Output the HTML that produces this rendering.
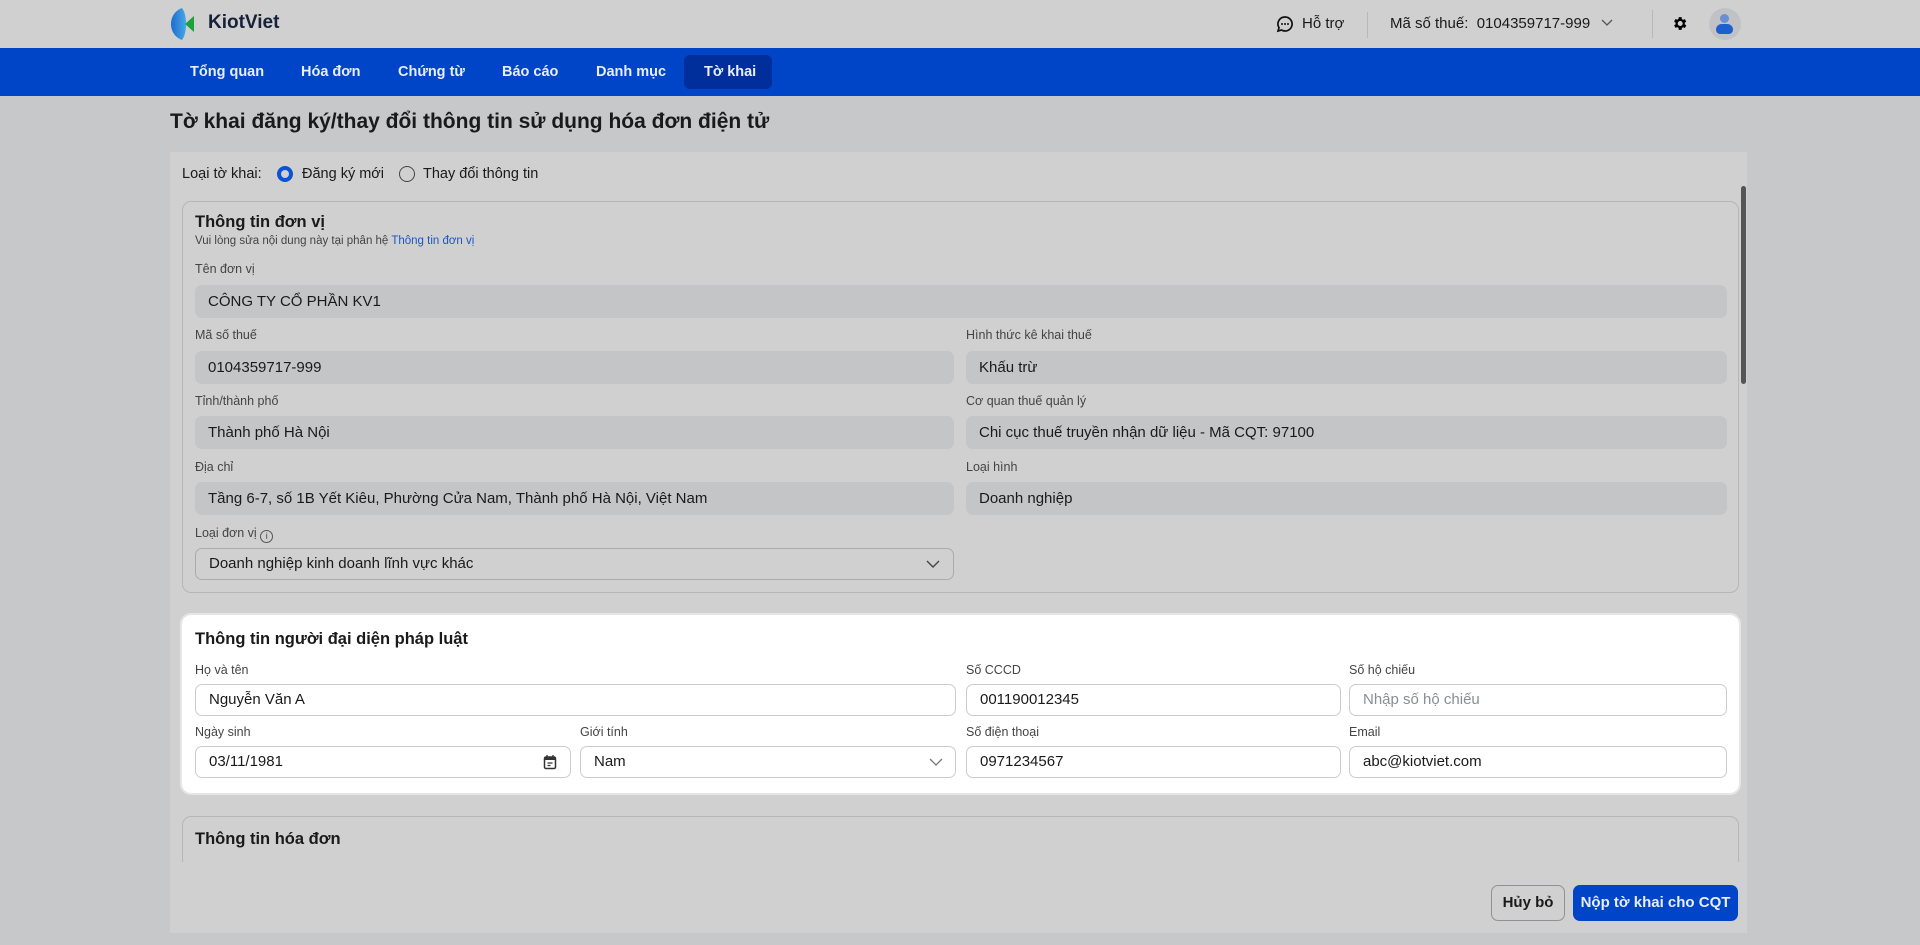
<!DOCTYPE html>
<html><head><meta charset="utf-8">
<style>
*{box-sizing:border-box;margin:0;padding:0}
body{width:1920px;height:945px;overflow:hidden;background:#c7c8ca;font-family:"Liberation Sans",sans-serif;color:#1a1a1a;position:relative}
.a{position:absolute}
.hdr{left:0;top:0;width:1920px;height:48px;background:#d0d0d0}
.nav{left:0;top:48px;width:1920px;height:48px;background:#0044c8}
.ni{top:48px;height:48px;line-height:48px;color:#e8eefc;font-size:14.5px;font-weight:bold}
.panel{left:170px;top:152px;width:1577px;height:781px;background:#d0d0d0}
.box{border:1px solid #b5b6b8;border-radius:9px}
.lbl{font-size:12.5px;color:#444}
.inp{height:33px;border-radius:7px;background:#c4c5c7;font-size:15px;line-height:33px;padding-left:13px;color:#1a1a1a}
.w{background:#fff;border:1px solid #c9ccd2;height:32px;line-height:30px}
.st{font-size:16.5px;font-weight:bold}
</style></head><body>
<div class="a hdr"></div>
<svg class="a" style="left:170px;top:8px" width="26" height="32" viewBox="0 0 26 32"><defs><linearGradient id="g" x1="0" y1="0" x2="1" y2="0"><stop offset="0" stop-color="#1f6bd1"/><stop offset="1" stop-color="#45a8e6"/></linearGradient></defs><path d="M12 0 C4 3 1 10 1 16 C1 22 4 29 12 32 C15 28 16 22 16 16 C16 10 15 4 12 0 Z" fill="url(#g)"/><path d="M24 8 L15 16 L24 24 Z" fill="#1aa33a"/></svg>
<div class="a" style="left:208px;top:12px;font-size:19px;font-weight:bold;color:#18213a">KiotViet</div>
<svg class="a" style="left:1276px;top:15px" width="18" height="18" viewBox="0 0 18 18"><path d="M9 2a7 7 0 1 1-3.5 13L2 16l1-3.3A7 7 0 0 1 9 2z" fill="none" stroke="#111" stroke-width="1.7"/><circle cx="6" cy="9" r="1" fill="#111"/><circle cx="9" cy="9" r="1" fill="#111"/><circle cx="12" cy="9" r="1" fill="#111"/></svg>
<div class="a" style="left:1302px;top:15px;font-size:15px">Hỗ trợ</div>
<div class="a" style="left:1367px;top:12px;width:1px;height:26px;background:#b8b8b8"></div>
<div class="a" style="left:1390px;top:15px;font-size:15px">Mã số thuế:&nbsp;&nbsp;0104359717-999</div>
<svg class="a" style="left:1601px;top:18px" width="12" height="10" viewBox="0 0 12 10"><path d="M1 2l5 5 5-5" fill="none" stroke="#555" stroke-width="1.3"/></svg>
<div class="a" style="left:1652px;top:10px;width:1px;height:28px;background:#b8b8b8"></div>
<svg class="a" style="left:1671px;top:15px" width="17" height="17" viewBox="0 0 24 24"><path fill="#000" d="M19.4 13a7.5 7.5 0 0 0 0-2l2.1-1.6-2-3.5-2.5 1a7 7 0 0 0-1.7-1L15 3h-4l-.4 2.7a7 7 0 0 0-1.7 1l-2.5-1-2 3.5L6.5 11a7.5 7.5 0 0 0 0 2l-2.1 1.6 2 3.5 2.5-1a7 7 0 0 0 1.7 1L11 21h4l.4-2.7a7 7 0 0 0 1.7-1l2.5 1 2-3.5zM13 15.5a3.5 3.5 0 1 1 0-7 3.5 3.5 0 0 1 0 7z"/></svg>
<div class="a" style="left:1709px;top:8px;width:32px;height:32px;border-radius:50%;background:#c0c2c6"></div>
<div class="a" style="left:1720px;top:14px;width:9px;height:9px;border-radius:50%;background:#6b8fcf"></div>
<div class="a" style="left:1716px;top:24px;width:17px;height:10px;border-radius:8px 8px 6px 6px;background:#1d5fcc"></div>
<div class="a nav"></div>
<div class="a ni" style="left:190px">Tổng quan</div>
<div class="a ni" style="left:301px">Hóa đơn</div>
<div class="a ni" style="left:398px">Chứng từ</div>
<div class="a ni" style="left:502px">Báo cáo</div>
<div class="a ni" style="left:596px">Danh mục</div>
<div class="a" style="left:684px;top:55px;width:88px;height:34px;border-radius:6px;background:#002f9c"></div>
<div class="a ni" style="left:704px">Tờ khai</div>
<div class="a" style="left:170px;top:110px;font-size:21px;font-weight:bold">Tờ khai đăng ký/thay đổi thông tin sử dụng hóa đơn điện tử</div>
<div class="a panel"></div>
<div class="a" style="left:1741px;top:186px;width:5px;height:198px;border-radius:3px;background:#555"></div>
<div class="a" style="left:182px;top:166px;font-size:14.5px">Loại tờ khai:</div>
<div class="a" style="left:277px;top:166px;width:16px;height:16px;border-radius:50%;border:4.5px solid #0b52d4;background:#d0d0d0"></div>
<div class="a" style="left:302px;top:166px;font-size:14.5px">Đăng ký mới</div>
<div class="a" style="left:399px;top:166px;width:16px;height:16px;border-radius:50%;border:1.3px solid #444"></div>
<div class="a" style="left:423px;top:166px;font-size:14.5px">Thay đổi thông tin</div>

<div class="a box" style="left:182px;top:201px;width:1557px;height:392px"></div>
<div class="a st" style="left:195px;top:213px">Thông tin đơn vị</div>
<div class="a" style="left:195px;top:235px;font-size:11.5px;color:#444">Vui lòng sửa nội dung này tại phân hệ <span style="color:#1a55c8">Thông tin đơn vị</span></div>
<div class="a lbl" style="left:195px;top:262px">Tên đơn vị</div>
<div class="a inp" style="left:195px;top:285px;width:1532px">CÔNG TY CỔ PHẦN KV1</div>
<div class="a lbl" style="left:195px;top:328px">Mã số thuế</div>
<div class="a lbl" style="left:966px;top:328px">Hình thức kê khai thuế</div>
<div class="a inp" style="left:195px;top:351px;width:759px">0104359717-999</div>
<div class="a inp" style="left:966px;top:351px;width:761px">Khấu trừ</div>
<div class="a lbl" style="left:195px;top:394px">Tỉnh/thành phố</div>
<div class="a lbl" style="left:966px;top:394px">Cơ quan thuế quản lý</div>
<div class="a inp" style="left:195px;top:416px;width:759px">Thành phố Hà Nội</div>
<div class="a inp" style="left:966px;top:416px;width:761px">Chi cục thuế truyền nhận dữ liệu - Mã CQT: 97100</div>
<div class="a lbl" style="left:195px;top:460px">Địa chỉ</div>
<div class="a lbl" style="left:966px;top:460px">Loại hình</div>
<div class="a inp" style="left:195px;top:482px;width:759px">Tầng 6-7, số 1B Yết Kiêu, Phường Cửa Nam, Thành phố Hà Nội, Việt Nam</div>
<div class="a inp" style="left:966px;top:482px;width:761px">Doanh nghiệp</div>
<div class="a lbl" style="left:195px;top:526px">Loại đơn vị <span style="display:inline-block;width:13px;height:13px;border:1px solid #555;border-radius:50%;font-size:9px;line-height:11px;text-align:center;vertical-align:-2px">i</span></div>
<div class="a inp" style="left:195px;top:548px;width:759px;height:32px;line-height:30px;background:transparent;border:1px solid #a9abaf">Doanh nghiệp kinh doanh lĩnh vực khác</div>
<svg class="a" style="left:926px;top:559px" width="14" height="10" viewBox="0 0 14 10"><path d="M1 2l6 6 6-6" fill="none" stroke="#444" stroke-width="1.4"/></svg>

<div class="a" style="left:182px;top:615px;width:1557px;height:178px;background:#fff;border-radius:9px;outline:2px solid #e6e6e6"></div>
<div class="a st" style="left:195px;top:630px">Thông tin người đại diện pháp luật</div>
<div class="a lbl" style="left:195px;top:663px">Họ và tên</div>
<div class="a lbl" style="left:966px;top:663px">Số CCCD</div>
<div class="a lbl" style="left:1349px;top:663px">Số hộ chiếu</div>
<div class="a inp w" style="left:195px;top:684px;width:761px">Nguyễn Văn A</div>
<div class="a inp w" style="left:966px;top:684px;width:375px">001190012345</div>
<div class="a inp w" style="left:1349px;top:684px;width:378px;color:#8a8d93">Nhập số hộ chiếu</div>
<div class="a lbl" style="left:195px;top:725px">Ngày sinh</div>
<div class="a lbl" style="left:580px;top:725px">Giới tính</div>
<div class="a lbl" style="left:966px;top:725px">Số điện thoại</div>
<div class="a lbl" style="left:1349px;top:725px">Email</div>
<div class="a inp w" style="left:195px;top:746px;width:376px">03/11/1981</div>
<svg class="a" style="left:543px;top:754px" width="14" height="16" viewBox="0 0 14 16"><rect x="1.5" y="3" width="11" height="11.5" rx="1.5" fill="none" stroke="#333" stroke-width="1.5"/><rect x="1.5" y="3" width="11" height="3" fill="#333"/><path d="M4 1v3M10 1v3M4.5 9h5M4.5 11.5h3" stroke="#333" stroke-width="1.3"/></svg>
<div class="a inp w" style="left:580px;top:746px;width:376px">Nam</div>
<svg class="a" style="left:929px;top:757px" width="14" height="10" viewBox="0 0 14 10"><path d="M1 2l6 6 6-6" fill="none" stroke="#777" stroke-width="1.3"/></svg>
<div class="a inp w" style="left:966px;top:746px;width:375px">0971234567</div>
<div class="a inp w" style="left:1349px;top:746px;width:378px">abc@kiotviet.com</div>

<div class="a" style="left:182px;top:816px;width:1557px;height:46px;border:1px solid #b5b6b8;border-bottom:none;border-radius:9px 9px 0 0"></div>
<div class="a st" style="left:195px;top:830px">Thông tin hóa đơn</div>

<div class="a" style="left:1491px;top:885px;width:74px;height:36px;border:1px solid #8f9196;border-radius:7px;font-size:15px;font-weight:bold;line-height:34px;text-align:center">Hủy bỏ</div>
<div class="a" style="left:1573px;top:885px;width:165px;height:36px;background:#0044c8;border-radius:7px;font-size:15px;font-weight:bold;line-height:36px;text-align:center;color:#e8eefc">Nộp tờ khai cho CQT</div>
</body></html>
